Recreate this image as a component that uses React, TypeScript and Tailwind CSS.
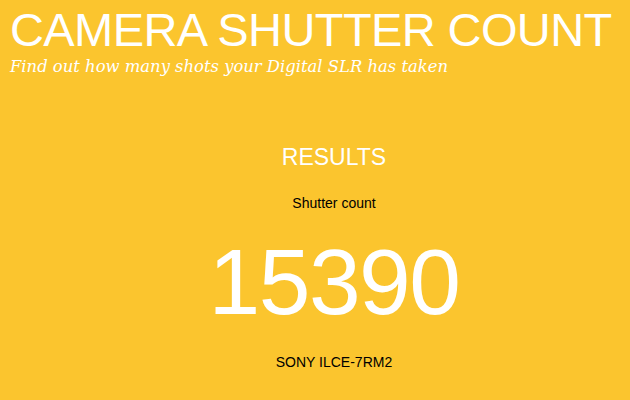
export default function App() {
  return (
    <div className="h-[400px] w-[630px] overflow-hidden bg-[#fbc52e] font-['Liberation_Sans',Arial,sans-serif]">
      <header className="px-[10px] pt-[4px]">
        <h1 className="whitespace-nowrap text-[47px] leading-[52px] tracking-[-0.6px] text-white">
          CAMERA SHUTTER COUNT
        </h1>
        <p className="mt-0 whitespace-nowrap font-['DejaVu_Serif',Georgia,serif] text-[16.4px] italic leading-[22px] text-white">
          Find out how many shots your Digital SLR has taken
        </p>
      </header>
      <main className="flex flex-col items-center pl-[38px] pt-[65px]">
        <h2 className="text-[23px] leading-[28px] text-white">RESULTS</h2>
        <div className="mt-[23px] text-[14px] leading-[18px] text-black">Shutter count</div>
        <div className="mt-[15px] text-[93px] leading-[110px] tracking-[-1.5px] text-white">15390</div>
        <div className="mt-[16px] text-[14px] leading-[18px] text-black">SONY ILCE-7RM2</div>
      </main>
    </div>
  )
}
